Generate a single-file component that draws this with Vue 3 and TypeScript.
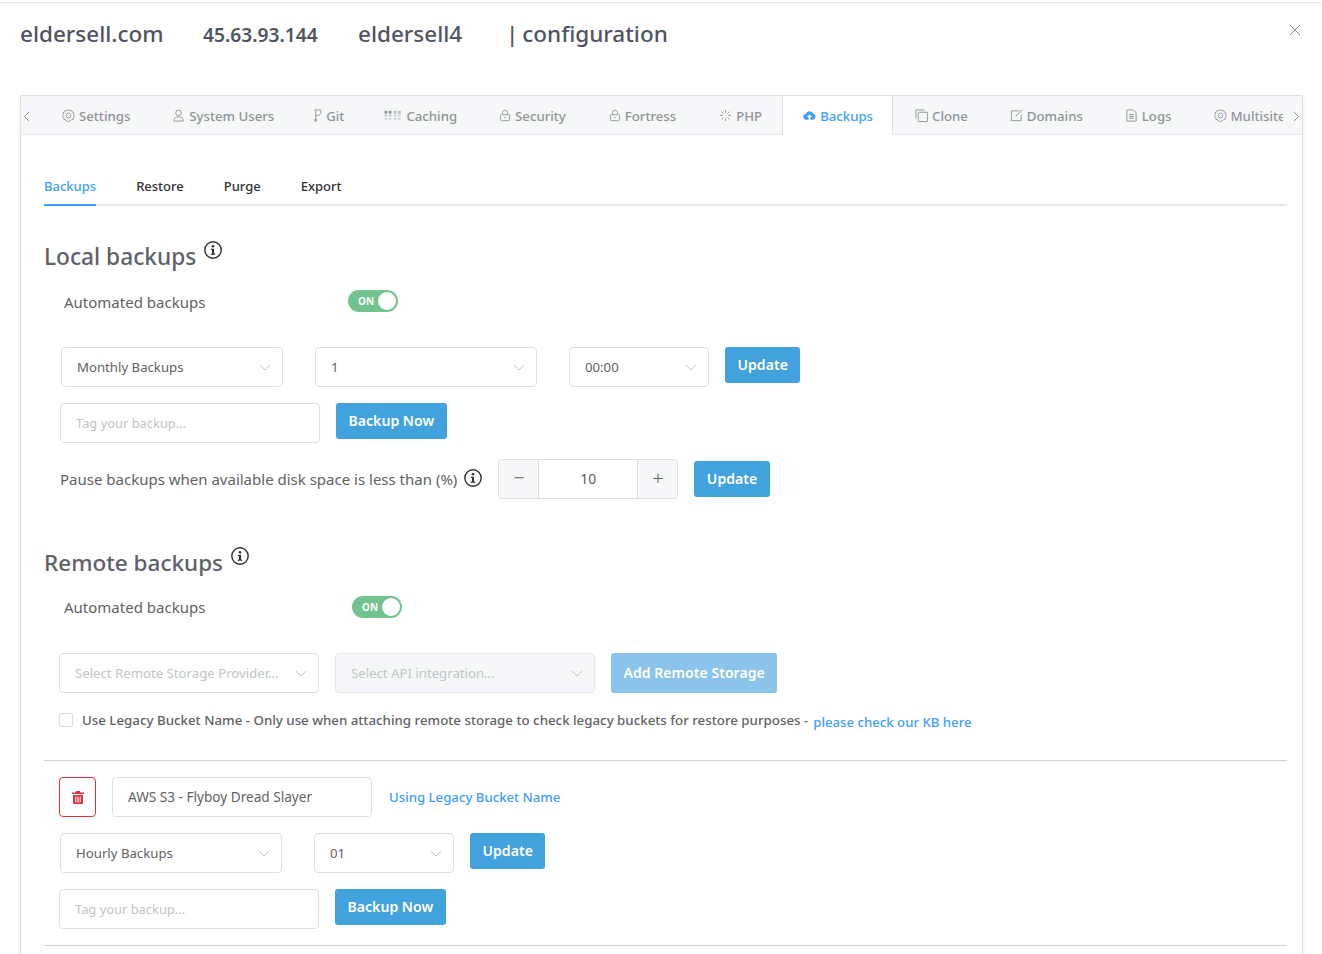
<script setup lang="ts">
const tabs = [
  { name: 'Settings', icon: 'gear' },
  { name: 'System Users', icon: 'user' },
  { name: 'Git', icon: 'git' },
  { name: 'Caching', icon: 'grid' },
  { name: 'Security', icon: 'lock' },
  { name: 'Fortress', icon: 'lock' },
  { name: 'PHP', icon: 'spin' },
  { name: 'Backups', icon: 'cloud', active: true },
  { name: 'Clone', icon: 'copy' },
  { name: 'Domains', icon: 'edit' },
  { name: 'Logs', icon: 'doc' },
  { name: 'Multisite', icon: 'gear' },
]
const subTabs = ['Backups', 'Restore', 'Purge', 'Export']
</script>

<template>
  <div class="page">
    <header class="head">
      <span class="t domain">eldersell.com</span>
      <span class="t ip">45.63.93.144</span>
      <span class="t user">eldersell4</span>
      <span class="t conf">| configuration</span>
      <svg class="close" width="12" height="12" viewBox="0 0 12 12"><path d="M1 1l10 10M11 1L1 11" stroke="#909399" fill="none" /></svg>
    </header>

    <section class="card">
      <div class="tabbar">
        <svg class="arrow" width="7" height="11" viewBox="0 0 7 11"><path d="M6 1L1.500 5.500 6 10" stroke="#909399" fill="none" /></svg>
        <div class="strip">
          <div v-for="tab in tabs" :key="tab.name" class="tab" :class="['tab-' + tab.icon, { active: tab.active }]">
            <svg class="ic" :class="{ wide: tab.icon === 'grid', thin: tab.icon === 'git' }" viewBox="0 0 14 14" fill="none" stroke="currentColor" stroke-width="1">
              <template v-if="tab.icon === 'gear'">
                <circle cx="7" cy="7" r="2.600" />
                <path d="M7 .6l1.500 1.300 2-.3.700 1.800 1.800.9-.5 2 .9 1.200-1.100 1.700-.1 1.900-2 .4L8.600 13 7 13.500 5.400 13 4 11.500l-2-.4-.1-1.900L.6 7.300l1-1.300-.5-2 1.800-.9.700-1.800 2 .3z" />
              </template>
              <template v-else-if="tab.icon === 'user'">
                <circle cx="7" cy="4.200" r="3" />
                <path d="M1.800 13c0-3 2.200-4.500 5.200-4.500s5.200 1.500 5.200 4.500z" />
              </template>
              <template v-else-if="tab.icon === 'git'">
                <path d="M4 1v12M4 1h5.500v3.500Q9.500 7 4 7.500M2.500 1H4" />
                <circle cx="4" cy="12" r="1.200" />
              </template>
              <template v-else-if="tab.icon === 'grid'">
                <g fill="currentColor" stroke="none">
                  <rect x="0" y="2" width="3" height="3" /><rect x="4.500" y="2" width="3" height="3" />
                  <rect x="0" y="6" width="3" height="2" opacity=".5" /><rect x="4.500" y="6" width="3" height="2" opacity=".5" />
                  <rect x="0" y="9.500" width="3" height="2" opacity=".4" /><rect x="4.500" y="9.500" width="3" height="2" opacity=".4" />
                  <rect x="10" y="2" width="3" height="3" opacity=".6" /><rect x="14.500" y="2" width="3" height="3" opacity=".6" />
                  <rect x="10" y="6" width="3" height="2" opacity=".4" /><rect x="14.500" y="6" width="3" height="2" opacity=".4" />
                  <rect x="10" y="9.500" width="3" height="2" opacity=".4" /><rect x="14.500" y="9.500" width="3" height="2" opacity=".4" />
                </g>
              </template>
              <template v-else-if="tab.icon === 'lock'">
                <rect x="1.800" y="6" width="10.400" height="7" rx="1" />
                <path d="M4 6V3.800a3 3 0 0 1 6 0V6M7 8.500v2" />
              </template>
              <template v-else-if="tab.icon === 'spin'">
                <path d="M7 1v3M7 10v3M1 7h3M10 7h3M2.800 2.800l2 2M11.200 2.800l-2 2M2.800 11.200l2-2M11.200 11.200l-2-2" />
              </template>
              <template v-else-if="tab.icon === 'cloud'">
                <path fill="currentColor" stroke="none" d="M3.500 11.500a3 3 0 0 1-.5-6A4.200 4.200 0 0 1 11 5.200a3.200 3.200 0 0 1-.4 6.300H8V8.600h1.800L7 5.800 4.200 8.600H6v2.900z" />
              </template>
              <template v-else-if="tab.icon === 'copy'">
                <path d="M1 10V1h9" />
                <rect x="3.500" y="3.500" width="10" height="10" rx=".5" />
              </template>
              <template v-else-if="tab.icon === 'edit'">
                <path d="M10 2H1.500v10.500H12V6M6 8l7-7" />
              </template>
              <template v-else>
                <path d="M2 1h7l3 3v9H2zM4.500 6h5M4.500 8h5M4.500 10h5" />
              </template>
            </svg>
            <span>{{ tab.name }}</span>
          </div>
        </div>
        <svg class="arrow right" width="7" height="11" viewBox="0 0 7 11"><path d="M1 1l4.500 4.500L1 10" stroke="#909399" fill="none" /></svg>
      </div>

      <div class="body">
        <nav class="subnav">
          <span v-for="(s, i) in subTabs" :key="s" class="sub" :class="{ on: i === 0 }">{{ s }}</span>
        </nav>

        <div class="h-row local">
          <h2>Local backups</h2>
          <svg class="info" width="18" height="18" viewBox="0 0 18 18"><circle cx="9" cy="9" r="8.200" fill="none" stroke="#303133" stroke-width="1.400" /><circle cx="9" cy="5.300" r="1.300" fill="#303133" /><path d="M7 7.800h3v4.700h1.200v1.200H6.800v-1.200H8V9H7z" fill="#303133" /></svg>
        </div>
        <div class="auto"><span>Automated backups</span><div class="toggle"><b>ON</b><i /></div></div>

        <div class="row r1">
          <div class="sel w222">Monthly Backups<svg class="chev" width="12" height="7" viewBox="0 0 12 7"><path d="M1 1l5 5 5-5" /></svg></div>
          <div class="sel w222 gap32">1<svg class="chev" width="12" height="7" viewBox="0 0 12 7"><path d="M1 1l5 5 5-5" /></svg></div>
          <div class="sel w140 gap32">00:00<svg class="chev" width="12" height="7" viewBox="0 0 12 7"><path d="M1 1l5 5 5-5" /></svg></div>
          <button class="btn up">Update</button>
        </div>
        <div class="row r2">
          <div class="sel w260 ph tag">Tag your backup...</div>
          <button class="btn">Backup Now</button>
        </div>
        <div class="row r3">
          <span class="lbl">Pause backups when available disk space is less than (%)</span>
          <svg class="info small" width="18" height="18" viewBox="0 0 18 18"><circle cx="9" cy="9" r="8.200" fill="none" stroke="#303133" stroke-width="1.400" /><circle cx="9" cy="5.300" r="1.300" fill="#303133" /><path d="M7 7.800h3v4.700h1.200v1.200H6.800v-1.200H8V9H7z" fill="#303133" /></svg>
          <div class="num">
            <span class="step">−</span><span class="val">10</span><span class="step">+</span>
          </div>
          <button class="btn up2">Update</button>
        </div>

        <div class="h-row remote">
          <h2>Remote backups</h2>
          <svg class="info" width="18" height="18" viewBox="0 0 18 18"><circle cx="9" cy="9" r="8.200" fill="none" stroke="#303133" stroke-width="1.400" /><circle cx="9" cy="5.300" r="1.300" fill="#303133" /><path d="M7 7.800h3v4.700h1.200v1.200H6.800v-1.200H8V9H7z" fill="#303133" /></svg>
        </div>
        <div class="auto a2"><span>Automated backups</span><div class="toggle"><b>ON</b><i /></div></div>

        <div class="row r4">
          <div class="sel w260 ph">Select Remote Storage Provider...<svg class="chev" width="12" height="7" viewBox="0 0 12 7"><path d="M1 1l5 5 5-5" /></svg></div>
          <div class="sel w260 ph dis">Select API integration...<svg class="chev" width="12" height="7" viewBox="0 0 12 7"><path d="M1 1l5 5 5-5" /></svg></div>
          <button class="btn faded">Add Remote Storage</button>
        </div>
        <div class="legacy">
          <span class="check" />
          <span class="ltext">Use Legacy Bucket Name - Only use when attaching remote storage to check legacy buckets for restore purposes -</span>
          <a class="kb">please check our KB here</a>
        </div>

        <hr class="rule r-a" />

        <div class="row r5">
          <button class="trash">
            <svg width="12" height="13" viewBox="0 0 12 13"><path fill="#e0303e" d="M4 0h4l.6 1.500H12v1.500H0V1.500h3.400zM1 4h10v8a1 1 0 0 1-1 1H2a1 1 0 0 1-1-1zm2.300 1.500v6h1v-6zm2.200 0v6h1v-6zm2.200 0v6h1v-6z" /></svg>
          </button>
          <div class="sel w260 name">AWS S3 - Flyboy Dread Slayer</div>
          <a class="legacy-link">Using Legacy Bucket Name</a>
        </div>
        <div class="row r6">
          <div class="sel w222">Hourly Backups<svg class="chev" width="12" height="7" viewBox="0 0 12 7"><path d="M1 1l5 5 5-5" /></svg></div>
          <div class="sel w140 gap32">01<svg class="chev" width="12" height="7" viewBox="0 0 12 7"><path d="M1 1l5 5 5-5" /></svg></div>
          <button class="btn up">Update</button>
        </div>
        <div class="row r7">
          <div class="sel w260 ph tag">Tag your backup...</div>
          <button class="btn">Backup Now</button>
        </div>
        <hr class="rule r-b" />
      </div>
    </section>
  </div>
</template>

<style>
html, body { margin: 0; background: #fff; overflow: hidden; }
</style>

<style scoped>
.page { height: 954px; overflow: hidden; box-sizing: border-box; border-top: 1px solid #e4e7ed; margin-top: 2px; font-family: "Noto Sans", "Open Sans", sans-serif; color: #606266; position: relative; }
.head { height: 92px; display: flex; align-items: flex-start; padding: 13px 0 0 20px; box-sizing: border-box; }
.t { font-size: 22.500px; font-weight: 500; line-height: 36px; color: #4f5560; white-space: nowrap; }
.domain { width: 183px; }
.ip { width: 155px; font-size: 19.200px; font-weight: 600; padding-top: 1px; }
.user { width: 148px; }
.conf { word-spacing: -2px; }
.close { position: absolute; right: 21px; top: 21px; }
.card { margin: 0 19px 0 20px; border: 1px solid #dcdfe6; box-shadow: 0 2px 4px rgba(0,0,0,.08); height: 900px; }
.tabbar { height: 38px; background: #f5f7fa; border-bottom: 1px solid #e4e7ed; display: flex; align-items: center; }
.arrow { margin: 3px 10px 0 2px; width: 7px; flex: none; }
.arrow.right { margin: 3px 0 0 10px; }
.strip { width: 1243px; flex: none; display: flex; overflow: hidden; height: 39px; align-self: flex-start; }
.tab { flex: none; height: 39px; box-sizing: border-box; padding: 0 20px 0 22px; display: flex; align-items: center; font-size: 13.200px; font-weight: 500; color: #909399; gap: 4px; }
.tab.active { background: #fff; color: #409eff; border: 1px solid #dcdfe6; border-top: 0; border-bottom-color: #fff; padding: 1px 19px 0 20px; }
.tab-git { margin-left: -3px; }
.tab-grid { margin-left: -2px; }
.tab-lock { padding-right: 21px; }
.ic { width: 13px; height: 13px; flex: none; overflow: visible; }
.tab-lock .ic { width: 12px; }
.ic.wide { width: 14px; margin-right: 4px; }
.ic.thin { margin-right: -3px; margin-left: -1px; }
.body { padding: 0 15px 0 23px; }
.subnav { margin-top: 35px; height: 34px; border-bottom: 2px solid #e4e7ed; display: flex; gap: 40px; box-sizing: content-box; }
.sub { font-size: 13px; font-weight: 500; line-height: 32px; color: #303133; height: 34px; box-sizing: border-box; }
.sub.on { color: #409eff; border-bottom: 2px solid #409eff; height: 36px; }
.h-row { display: flex; align-items: flex-start; gap: 8px; }
.local { margin-top: 34px; }
.remote { margin-top: 47px; }
h2 { margin: 0; font-size: 22.500px; line-height: 34px; font-weight: 500; color: #5e6167; }
.local h2 { font-size: 22.700px; }
.info { flex: none; margin-top: 1px; }
.auto { display: flex; align-items: center; margin: 15px 0 0 20px; height: 26px; font-size: 15px; color: #606266; }
.auto > span { width: 284px; }
.a2 { margin-top: 14px; }
.a2 > span { width: 288px; }
.toggle { width: 50px; height: 22px; border-radius: 11px; background: #72c48f; position: relative; margin-top: -2px; }
.a2 .toggle { margin-top: 0; }
.toggle b { position: absolute; left: 10px; top: 3px; font-size: 10px; line-height: 16px; color: #fff; font-weight: 700; }
.toggle i { position: absolute; right: 2px; top: 2px; width: 18px; height: 18px; border-radius: 50%; background: #fff; }
.row { display: flex; align-items: flex-start; }
.r1 { margin: 32px 0 0 17px; }
.r2 { margin: 16px 0 0 16px; }
.r3 { margin: 16px 0 0 16px; height: 40px; align-items: center; }
.r4 { margin: 33px 0 0 15px; gap: 16px; }
.r5 { margin: 16px 0 0 15px; align-items: center; }
.r6 { margin: 16px 0 0 16px; }
.r7 { margin: 16px 0 0 15px; }
.sel { height: 40px; box-sizing: border-box; border: 1px solid #dcdfe6; border-radius: 4px; padding: 0 15px; font-size: 13.200px; line-height: 38px; color: #606266; background: #fff; position: relative; flex: none; white-space: nowrap; }
.name { font-size: 13.600px; }
.tag { font-size: 12.900px; }
.w222 { width: 222px; }
.w260 { width: 260px; }
.w140 { width: 140px; }
.gap32 { margin-left: 32px; }
.ph { color: #c0c4cc; }
.dis { background: #f5f7fa; border-color: #e4e7ed; }
.chev { position: absolute; right: 11px; top: 16px; fill: none; stroke: #c0c4cc; stroke-width: 1; }
.btn { height: 36px; padding: 0 12.500px; border: 0; border-radius: 3px; background: #42a2dd; color: #fff; font: 600 14.100px/36px "Noto Sans", sans-serif; margin-left: 16px; flex: none; white-space: nowrap; }
.btn.up { margin-left: 16px; }
.r4 .btn { margin-left: 0; height: 40px; background: #8ac4ea; }
.lbl { font-size: 15px; color: #606266; white-space: nowrap; }
.small { margin-left: 7px; margin-top: -2px; }
.num { display: flex; height: 40px; width: 180px; margin-left: 16px; box-sizing: border-box; border: 1px solid #dcdfe6; border-radius: 4px; overflow: hidden; font-size: 14px; flex: none; }
.step { width: 39px; background: #f5f7fa; text-align: center; line-height: 36px; font-size: 20px; font-weight: 300; color: #606266; }
.val { width: 98px; text-align: center; line-height: 38px; border-left: 1px solid #dcdfe6; border-right: 1px solid #dcdfe6; box-sizing: content-box; flex: 1; }
.legacy { display: flex; align-items: center; margin: 16px 0 0 15px; height: 22px; }
.check { width: 14px; height: 14px; box-sizing: border-box; border: 1px solid #dcdfe6; border-radius: 2px; margin-right: 9px; flex: none; }
.ltext { font-size: 13.300px; font-weight: 500; color: #606266; white-space: nowrap; }
.kb { font-size: 13.200px; font-weight: 500; color: #409eff; margin-left: 5px; margin-top: 4px; white-space: nowrap; }
.rule { border: 0; border-top: 1px solid #cfd1d5; margin: 0; }
.r-a { margin-top: 29px; }
.r-b { margin-top: 16px; }
.trash { width: 37px; height: 40px; border: 1px solid #e0303e; border-radius: 4px; background: #fff; padding: 0; display: flex; align-items: center; justify-content: center; flex: none; margin-right: 16px; }
.legacy-link { margin-left: 17px; font-size: 13.200px; font-weight: 500; color: #409eff; white-space: nowrap; }
</style>
